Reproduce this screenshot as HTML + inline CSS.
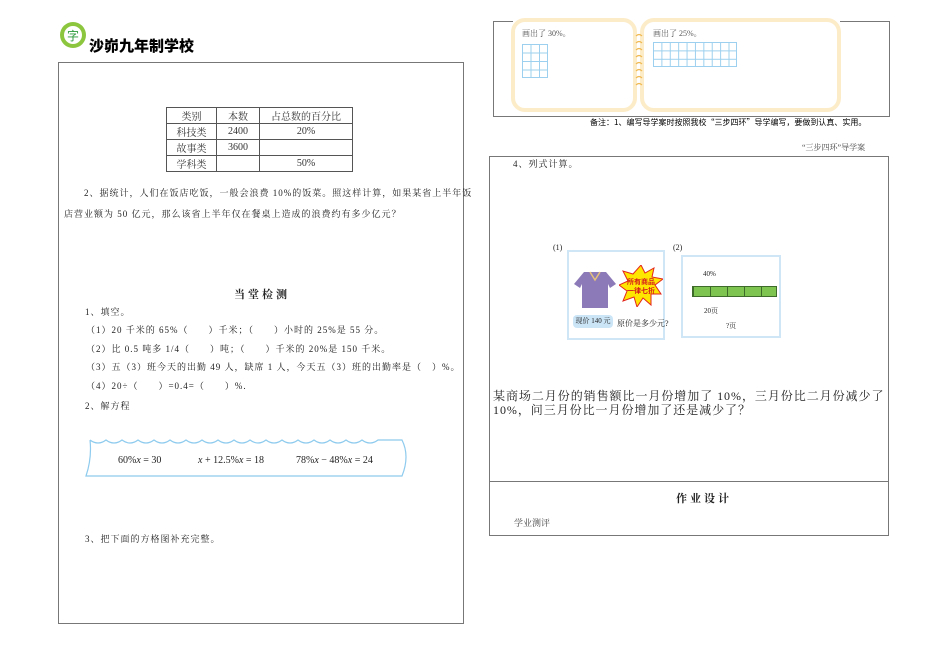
<!DOCTYPE html>
<html><head><meta charset="utf-8"><style>
*{margin:0;padding:0;box-sizing:border-box}
body{width:950px;height:658px;background:#fff;position:relative;overflow:hidden;font-family:"Liberation Serif","Noto Serif CJK SC",serif;color:#222}
.a{position:absolute;white-space:nowrap}
.s{font-size:9px;letter-spacing:1px}
.box{position:absolute;border:1px solid #777}
table{border-collapse:collapse;position:absolute;left:166px;top:107px;font-size:10px;color:#333}
td{border:1px solid #555;height:16px;text-align:center;padding:0 3px}
.card{position:absolute;border:4px solid #fcecc8;border-radius:14px;background:#fff}
.grid{position:absolute;background-image:linear-gradient(#9cd0ee 1px,transparent 1px),linear-gradient(90deg,#9cd0ee 1px,transparent 1px);border-right:1px solid #9cd0ee;border-bottom:1px solid #9cd0ee}
</style></head><body>
<svg class="a" style="left:59px;top:21px" width="28" height="28"><circle cx="14" cy="14" r="13" fill="#8cc63e"/><circle cx="14" cy="14" r="9" fill="#fff"/><text x="14" y="19" font-size="12" text-anchor="middle" fill="#2a9a3a" font-family="Noto Sans CJK SC">字</text></svg>
<div class="a" style="left:89px;top:35px;font-size:15px;font-weight:900;font-family:'Noto Sans CJK SC',sans-serif;color:#000">沙峁九年制学校</div>
<div class="box" style="left:58px;top:62px;width:406px;height:562px"></div>
<table><tr><td style="width:50px">类别</td><td style="width:43px">本数</td><td style="width:93px">占总数的百分比</td></tr>
<tr><td>科技类</td><td>2400</td><td>20%</td></tr><tr><td>故事类</td><td>3600</td><td></td></tr><tr><td>学科类</td><td></td><td>50%</td></tr></table>
<div class="a s" style="left:84px;top:186px">2、据统计，人们在饭店吃饭，一般会浪费 10%的饭菜。照这样计算，如果某省上半年饭</div>
<div class="a s" style="left:64px;top:207px">店营业额为 50 亿元，那么该省上半年仅在餐桌上造成的浪费约有多少亿元？</div>
<div class="a" style="left:234px;top:286px;font-size:11px;letter-spacing:3px;font-weight:bold">当堂检测</div>
<div class="a s" style="left:85px;top:305px">1、填空。</div>
<div class="a s" style="left:86px;top:323px">（1）20 千米的 65%（　　）千米；（　　）小时的 25%是 55 分。</div>
<div class="a s" style="left:86px;top:342px">（2）比 0.5 吨多 1/4（　　）吨；（　　）千米的 20%是 150 千米。</div>
<div class="a s" style="left:86px;top:360px">（3）五（3）班今天的出勤 49 人，缺席 1 人，今天五（3）班的出勤率是（　）%。</div>
<div class="a s" style="left:86px;top:379px">（4）20÷（　　）=0.4=（　　）%.</div>
<div class="a s" style="left:85px;top:399px">2、解方程</div>
<svg class="a" style="left:84px;top:436px" width="326" height="44"><path d="M6 4 q8 6 16 0 q8 6 16 0 q8 6 16 0 q8 6 16 0 q8 6 16 0 q8 6 16 0 q8 6 16 0 q8 6 16 0 q8 6 16 0 q8 6 16 0 q8 6 16 0 q8 6 16 0 q8 6 16 0 q8 6 16 0 q8 6 16 0 q8 6 16 0 q8 6 16 0 q8 6 16 0 L318 4 q8 16 0 36 L2 40 q6 -18 4 -36" fill="none" stroke="#8ecbee" stroke-width="1.2"/></svg>
<div class="a" style="left:118px;top:455px;font-size:10px">60%<i>x</i> = 30</div>
<div class="a" style="left:198px;top:455px;font-size:10px"><i>x</i> + 12.5%<i>x</i> = 18</div>
<div class="a" style="left:296px;top:455px;font-size:10px">78%<i>x</i> − 48%<i>x</i> = 24</div>
<div class="a s" style="left:85px;top:532px">3、把下面的方格图补充完整。</div>

<div class="a" style="left:493px;top:21px;width:20px;border-top:1px solid #777"></div>
<div class="a" style="left:840px;top:21px;width:50px;border-top:1px solid #777"></div>
<div class="a" style="left:493px;top:21px;height:96px;border-left:1px solid #777"></div>
<div class="a" style="left:889px;top:21px;height:96px;border-left:1px solid #777"></div>
<div class="a" style="left:493px;top:116px;width:397px;border-top:1px solid #777"></div>
<div class="card" style="left:511px;top:18px;width:126px;height:94px"></div>
<div class="card" style="left:640px;top:18px;width:201px;height:94px"></div>
<svg class="a" style="left:634px;top:32px" width="10" height="60"><path d="M2 4 q3 -3 6 0 M2 11 q3 -3 6 0 M2 18 q3 -3 6 0 M2 25 q3 -3 6 0 M2 32 q3 -3 6 0 M2 39 q3 -3 6 0 M2 46 q3 -3 6 0 M2 53 q3 -3 6 0" fill="none" stroke="#f0b850" stroke-width="1.2"/></svg>
<div class="a" style="left:522px;top:28px;font-size:8px;color:#555">画出了 30%。</div>
<div class="a" style="left:653px;top:28px;font-size:8px;color:#555">画出了 25%。</div>
<div class="grid" style="left:522px;top:44px;width:26px;height:34px;background-size:8.5px 8.5px"></div>
<div class="grid" style="left:653px;top:42px;width:84px;height:25px;background-size:8.4px 8.4px"></div>
<div class="a" style="left:590px;top:117px;font-size:8px;font-family:'Noto Sans CJK SC',sans-serif;color:#000">备注：1、编写导学案时按照我校“三步四环”导学编写，要做到认真、实用。</div>
<div class="a" style="left:802px;top:142px;font-size:8px;color:#444">“三步四环”导学案</div>
<div class="box" style="left:489px;top:156px;width:400px;height:380px"></div>
<div class="a" style="left:489px;top:481px;width:400px;border-top:1px solid #777"></div>
<div class="a s" style="left:513px;top:157px">4、列式计算。</div>
<div class="a" style="left:553px;top:243px;font-size:8px">(1)</div>
<div class="a" style="left:673px;top:243px;font-size:8px">(2)</div>
<div class="a" style="left:567px;top:250px;width:98px;height:90px;border:2px solid #cfe6f7;background:#fff"></div>
<svg class="a" style="left:572px;top:270px" width="46" height="40"><path d="M12 2 L34 2 L44 14 L38 18 L36 14 L36 38 L10 38 L10 14 L8 18 L2 14 Z" fill="#8c7ab8"/><path d="M18 2 L23 10 L28 2" fill="none" stroke="#e6c27a" stroke-width="1.5"/></svg>
<svg class="a" style="left:619px;top:265px" width="44" height="42"><polygon points="22,0 26,8 35,3 33,12 44,14 36,20 42,29 32,29 32,40 24,33 18,42 15,32 4,36 8,26 0,20 9,16 4,6 14,9" fill="#ffe600" stroke="#e3261c"/><text x="22" y="19" font-size="7" text-anchor="middle" fill="#d41c1c" font-weight="bold" font-family="Noto Sans CJK SC">所有商品</text><text x="22" y="28" font-size="7" text-anchor="middle" fill="#d41c1c" font-weight="bold" font-family="Noto Sans CJK SC">一律七折</text></svg>
<div class="a" style="left:573px;top:315px;width:40px;height:13px;background:#cbe5f7;border-radius:4px;font-size:7px;text-align:center;line-height:13px">现价 140 元</div>
<div class="a" style="left:617px;top:318px;font-size:8px">原价是多少元?</div>
<div class="a" style="left:681px;top:255px;width:100px;height:83px;border:2px solid #cfe6f7;background:#fff"></div>
<div class="a" style="left:703px;top:270px;font-size:7px">40%</div>
<div class="a" style="left:692px;top:286px;width:85px;height:11px;background:#7dc450;border:1px solid #3e6b2a;background-image:linear-gradient(90deg,#3e6b2a 1px,transparent 1px);background-size:17px 11px"></div>
<div class="a" style="left:704px;top:306px;font-size:7px">20页</div>
<div class="a" style="left:726px;top:321px;font-size:7px">?页</div>
<div class="a" style="left:493px;top:389px;font-size:12px;line-height:14px;letter-spacing:0.95px">某商场二月份的销售额比一月份增加了 10%，三月份比二月份减少了<br>10%，问三月份比一月份增加了还是减少了？</div>
<div class="a" style="left:676px;top:490px;font-size:11px;letter-spacing:3px;font-weight:bold">作业设计</div>
<div class="a" style="left:514px;top:516px;font-size:9px;color:#444">学业测评</div>
</body></html>
